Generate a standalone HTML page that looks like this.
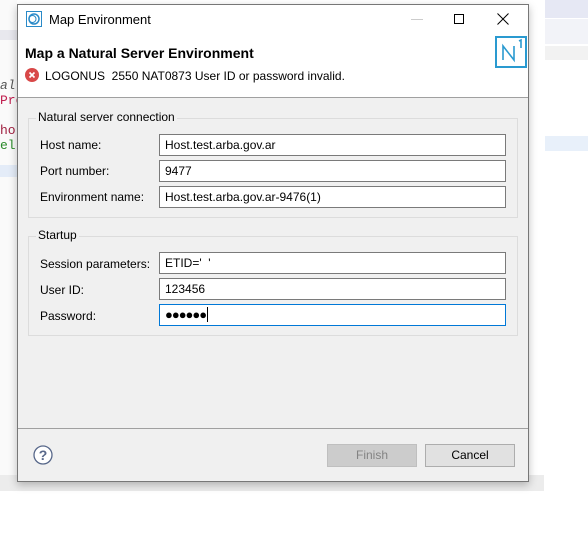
<!DOCTYPE html>
<html><head><style>
*{box-sizing:border-box}
body{margin:0;width:588px;height:534px;background:#fff;position:relative;overflow:hidden;font-family:"Liberation Sans",Arial,sans-serif;font-size:12px;color:#000}
.abs{position:absolute}
.dlg{left:17px;top:4px;width:512px;height:478px;border:1px solid #777;background:#f0f0f0;box-shadow:0 3px 8px rgba(0,0,0,.25)}
.inp{position:absolute;left:141px;width:347px;height:22px;background:#fff;border:1px solid #7a7a7a;padding:3px 5px;font-size:12px}
.lbl{position:absolute;left:22px;font-size:12px}
.grp{position:absolute;left:10px;width:490px;border:1px solid #dcdcdc}
.gt{position:absolute;left:7px;top:-9px;background:#f0f0f0;padding:0 2px;font-size:12px}
.btn{position:absolute;top:439px;width:90px;height:23px;border:1px solid #adadad;background:#e1e1e1;text-align:center;line-height:21px}
</style></head><body>
<div class="abs" style="left:0;top:0;width:17px;height:480px;background:#fafafa"></div>
<div class="abs" style="left:0;top:30px;width:17px;height:10px;background:#e8e8ee"></div>
<div class="abs" style="left:0;top:165px;width:17px;height:12px;background:#e4ecf8"></div>
<div class="abs" style="left:0;top:78px;font:13px 'Liberation Mono',monospace;color:#555;font-style:italic">al</div>
<div class="abs" style="left:0;top:93px;font:13px 'Liberation Mono',monospace;color:#c02050">Pro</div>
<div class="abs" style="left:0;top:123px;font:13px 'Liberation Mono',monospace;color:#a02040">hor</div>
<div class="abs" style="left:0;top:138px;font:13px 'Liberation Mono',monospace;color:#2a8a2a">ell</div>
<div class="abs" style="left:0;top:475px;width:544px;height:16px;background:#ececec"></div>
<div class="abs" style="left:545px;top:0;width:43px;height:18px;background:#e6e8f4"></div>
<div class="abs" style="left:545px;top:19px;width:43px;height:25px;background:#f2f3f8"></div>
<div class="abs" style="left:545px;top:46px;width:43px;height:14px;background:#f2f2f2"></div>
<div class="abs" style="left:545px;top:136px;width:43px;height:15px;background:#e8f0fa"></div>
<div class="abs dlg">
 <div class="abs" style="left:0;top:0;width:510px;height:93px;background:#fff;border-bottom:1px solid #a0a0a0"></div>
 <svg class="abs" style="left:8px;top:6px" width="16" height="16"><rect x="0.5" y="0.5" width="15" height="15" fill="#fff" stroke="#2a8ac8"/><circle cx="8" cy="8" r="5" fill="none" stroke="#2a8ac8" stroke-width="1.5"/><circle cx="6.5" cy="8" r="3.5" fill="none" stroke="#2a8ac8" stroke-width="1"/></svg>
 <div class="abs" style="left:31px;top:7px;font-size:13px">Map Environment</div>
 <div class="abs" style="left:393px;top:14px;width:12px;height:1px;background:#ccc"></div>
 <div class="abs" style="left:436px;top:9px;width:10px;height:10px;border:1px solid #000"></div>
 <svg class="abs" style="left:479px;top:8px" width="12" height="12"><path d="M0.5 0.5L11.5 11.5M11.5 0.5L0.5 11.5" stroke="#000" stroke-width="1"/></svg>
 <div class="abs" style="left:7px;top:40px;font-size:14px;font-weight:bold">Map a Natural Server Environment</div>
 <svg class="abs" style="left:7px;top:63px" width="14" height="14"><circle cx="7" cy="7" r="7" fill="#d84848"/><path d="M4.5 4.5L9.5 9.5M9.5 4.5L4.5 9.5" stroke="#fff" stroke-width="1.6"/></svg>
 <div class="abs" style="left:27px;top:64px;font-size:12px">LOGONUS&nbsp; 2550 NAT0873 User ID or password invalid.</div>
 <svg class="abs" style="left:477px;top:31px" width="32" height="32"><rect x="1" y="1" width="30" height="30" fill="#fff" stroke="#2a9ad0" stroke-width="2"/><path d="M8 24V10L19 24V10" fill="none" stroke="#2a9ad0" stroke-width="1.6"/><path d="M24 5L26 4V12" fill="none" stroke="#2a9ad0" stroke-width="1.6"/></svg>
 <div class="grp" style="top:113px;height:100px"><div class="gt">Natural server connection</div></div>
 <div class="lbl" style="top:133px">Host name:</div><div class="inp" style="top:129px">Host.test.arba.gov.ar</div>
 <div class="lbl" style="top:159px">Port number:</div><div class="inp" style="top:155px">9477</div>
 <div class="lbl" style="top:185px">Environment name:</div><div class="inp" style="top:181px">Host.test.arba.gov.ar-9476(1)</div>
 <div class="grp" style="top:231px;height:100px"><div class="gt">Startup</div></div>
 <div class="lbl" style="top:252px">Session parameters:</div><div class="inp" style="top:247px">ETID=' &nbsp;'</div>
 <div class="lbl" style="top:278px">User ID:</div><div class="inp" style="top:273px">123456</div>
 <div class="lbl" style="top:304px">Password:</div><div class="inp" style="top:299px;border-color:#0078d7;letter-spacing:-1px;font-size:13px;padding-top:2px">●●●●●●<span style="display:inline-block;width:1px;height:15px;background:#000;vertical-align:-3px;margin-left:1px"></span></div>
 <div class="abs" style="left:0;top:423px;width:510px;height:1px;background:#a0a0a0"></div>
 <svg class="abs" style="left:15px;top:440px" width="20" height="20"><circle cx="10" cy="10" r="9" fill="#fff" stroke="#58688a" stroke-width="1.3"/><text x="10" y="15" text-anchor="middle" font-family="Liberation Sans" font-weight="bold" font-size="14" fill="#58688a">?</text></svg>
 <div class="btn" style="left:309px;background:#cccccc;border-color:#bfbfbf;color:#838383">Finish</div>
 <div class="btn" style="left:407px">Cancel</div>
</div>
</body></html>
